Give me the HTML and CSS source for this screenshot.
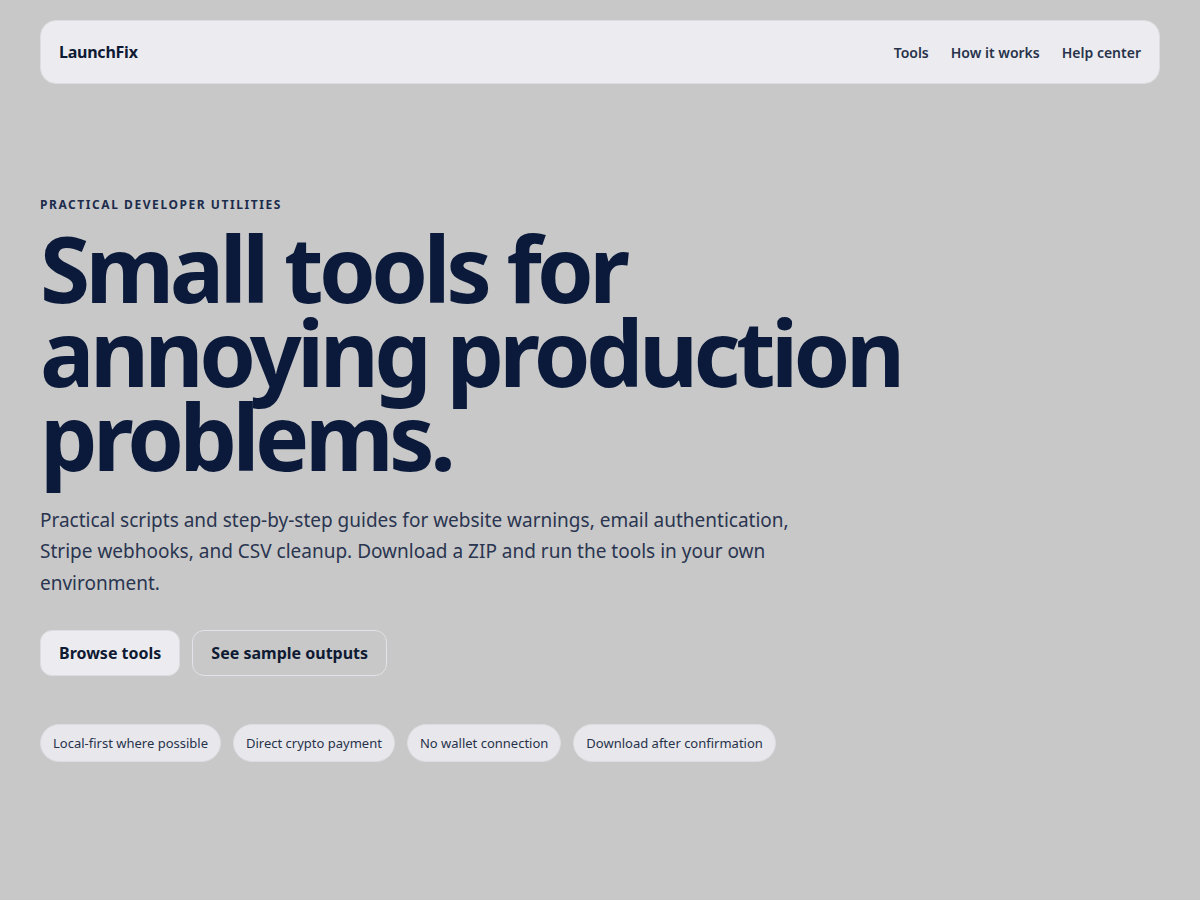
FILE: index.html
```html
<!DOCTYPE html>
<html lang="en">
<head>
<meta charset="utf-8">
<title>LaunchFix</title>
<link rel="stylesheet" href="styles.css">
</head>
<body>
<div class="page">
  <header class="topbar">
    <a class="logo" href="#">LaunchFix</a>
    <nav class="nav">
      <a href="#">Tools</a>
      <a href="#">How it works</a>
      <a href="#">Help center</a>
    </nav>
  </header>
  <main class="hero">
    <p class="eyebrow">PRACTICAL DEVELOPER UTILITIES</p>
    <h1 class="title">Small tools for annoying production problems.</h1>
    <p class="lead">Practical scripts and step-by-step guides for website warnings, email authentication, Stripe webhooks, and CSV cleanup. Download a ZIP and run the tools in your own environment.</p>
    <div class="actions">
      <a class="btn btn-primary" href="#">Browse tools</a>
      <a class="btn btn-ghost" href="#">See sample outputs</a>
    </div>
    <ul class="chips">
      <li>Local-first where possible</li>
      <li>Direct crypto payment</li>
      <li>No wallet connection</li>
      <li>Download after confirmation</li>
    </ul>
  </main>
</div>
</body>
</html>
```

FILE: styles.css
```css
* { box-sizing: border-box; }
html, body { margin: 0; padding: 0; }
body {
  background: #c8c8c8;
  font-family: "Noto Sans", "DejaVu Sans", sans-serif;
  color: #0b1a3a;
}
a { text-decoration: none; color: inherit; }
.page {
  padding: 20px 40px;
}
.topbar {
  display: flex;
  align-items: center;
  justify-content: space-between;
  height: 64px;
  padding: 0 18px 0 18px;
  background: #ececf0;
  border: 1px solid #dcdce2;
  border-radius: 16px;
}
.logo {
  font-size: 16px;
  font-weight: 700;
  letter-spacing: -0.015em;
  color: #0f1a33;
}
.nav {
  display: flex;
  gap: 22px;
}
.nav a {
  font-size: 14px;
  font-weight: 600;
  color: #27324b;
}
.hero {
  padding-top: 113px;
}
.eyebrow {
  margin: 0 0 13px;
  font-size: 12px;
  line-height: 16px;
  font-weight: 700;
  letter-spacing: 0.13em;
  color: #1c2c4c;
}
.title {
  margin: 0;
  font-size: 91px;
  line-height: 0.923;
  font-weight: 700;
  letter-spacing: -0.05em;
  color: #0b1a3a;
  max-width: 900px;
}
.lead {
  margin: 27px 0 0;
  max-width: 800px;
  font-size: 19px;
  line-height: 1.66;
  color: #2a3550;
}
.actions {
  display: flex;
  gap: 12px;
  margin-top: 30px;
}
.btn {
  display: inline-flex;
  align-items: center;
  height: 46px;
  padding: 0 18px;
  border-radius: 12px;
  font-size: 16px;
  font-weight: 700;
  color: #0f1a33;
  border: 1px solid #dcdce2;
}
.btn-primary {
  background: #ececf0;
}
.btn-ghost {
  background: transparent;
  border-color: #e2e2e8;
}
.chips {
  display: flex;
  gap: 12px;
  list-style: none;
  margin: 48px 0 0;
  padding: 0;
}
.chips li {
  display: inline-flex;
  align-items: center;
  height: 38px;
  padding: 0 12px;
  border-radius: 999px;
  background: #e8e8ec;
  border: 1px solid #dcdce2;
  font-size: 13px;
  color: #27324b;
}
```
